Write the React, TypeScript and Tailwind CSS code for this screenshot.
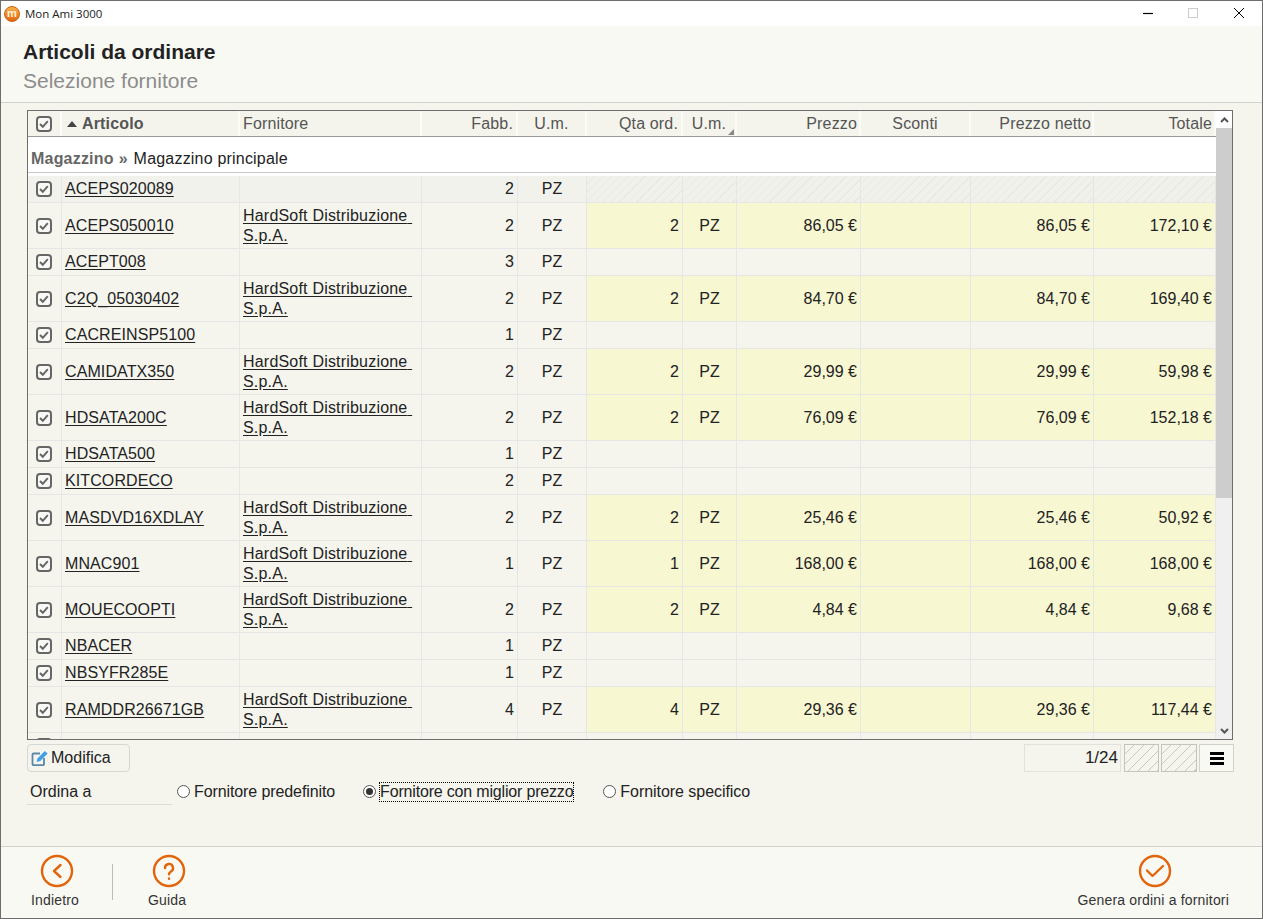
const gridCols = "grid grid-cols-[34px_178px_182px_96px_69px_96px_54px_124px_110px_123px_122px]";

type Row = {
  code: string;
  need: number;
  qty?: number;
  price?: string;
  total?: string;
  hatched?: boolean;
};

const rows: Row[] = [
  { code: "ACEPS020089", need: 2, hatched: true },
  { code: "ACEPS050010", need: 2, qty: 2, price: "86,05 €", total: "172,10 €" },
  { code: "ACEPT008", need: 3 },
  { code: "C2Q_05030402", need: 2, qty: 2, price: "84,70 €", total: "169,40 €" },
  { code: "CACREINSP5100", need: 1 },
  { code: "CAMIDATX350", need: 2, qty: 2, price: "29,99 €", total: "59,98 €" },
  { code: "HDSATA200C", need: 2, qty: 2, price: "76,09 €", total: "152,18 €" },
  { code: "HDSATA500", need: 1 },
  { code: "KITCORDECO", need: 2 },
  { code: "MASDVD16XDLAY", need: 2, qty: 2, price: "25,46 €", total: "50,92 €" },
  { code: "MNAC901", need: 1, qty: 1, price: "168,00 €", total: "168,00 €" },
  { code: "MOUECOOPTI", need: 2, qty: 2, price: "4,84 €", total: "9,68 €" },
  { code: "NBACER", need: 1 },
  { code: "NBSYFR285E", need: 1 },
  { code: "RAMDDR26671GB", need: 4, qty: 4, price: "29,36 €", total: "117,44 €" },
];

const hatch = "bg-[repeating-linear-gradient(135deg,#f1f1ec_0px,#f1f1ec_5px,#e9e9e4_5px,#e9e9e4_6px)]";

function Check() {
  return (
    <svg width="16" height="16" viewBox="0 0 16 16" fill="none">
      <rect x="1" y="1" width="14" height="14" rx="3" stroke="#666666" strokeWidth="2" fill="#f8f8f4" />
      <path d="M4 8l2.8 2.8 5-5.6" stroke="#666666" strokeWidth="2" />
    </svg>
  );
}

function HeadCell({ children, className = "" }: { children?: React.ReactNode; className?: string }) {
  return (
    <div className={`flex items-center border-r-2 border-[#fbfbf8] pt-[1px] tracking-[0.15px] text-[#555555] ${className}`}>{children}</div>
  );
}

function Cell({ children, className = "" }: { children?: React.ReactNode; className?: string }) {
  return (
    <div className={`flex items-center border-r border-[#e6e6e6] ${className}`}>{children}</div>
  );
}

function TableRow({ row }: { row: Row }) {
  const filled = row.qty !== undefined;
  const tail = row.hatched ? hatch : filled ? "bg-[#f7f7d2]" : "";
  return (
    <div className={`${gridCols} border-b border-[#e6e6e6] text-[#222222] ${filled ? "h-[46px]" : "h-[27px]"} ${row.hatched ? "bg-[#f2f2ed]" : ""}`}>
      <Cell className="justify-center pr-[1px]"><Check /></Cell>
      <Cell className="pl-[3px]"><span className="underline underline-offset-2 tracking-[0.1px]">{row.code}</span></Cell>
      <Cell className="pl-[3px]">
        {filled && (
          <div className="leading-[20px] tracking-[0.2px] underline underline-offset-2 whitespace-pre">
            HardSoft Distribuzione{" "}
            <br />
            S.p.A.
          </div>
        )}
      </Cell>
      <Cell className="justify-end pr-[3px]">{row.need}</Cell>
      <Cell className="justify-center">PZ</Cell>
      <Cell className={`justify-end pr-[3px] ${tail}`}>{row.qty}</Cell>
      <Cell className={`justify-center ${tail}`}>{filled ? "PZ" : ""}</Cell>
      <Cell className={`justify-end pr-[3px] ${tail}`}>{row.price}</Cell>
      <Cell className={tail} />
      <Cell className={`justify-end pr-[3px] ${tail}`}>{row.price}</Cell>
      <Cell className={`justify-end pr-[3px] ${tail}`}>{row.total}</Cell>
    </div>
  );
}

function Radio({ checked }: { checked?: boolean }) {
  return (
    <span className="flex h-[13px] w-[13px] items-center justify-center rounded-full border border-[#555555] bg-white">
      {checked && <span className="h-[7px] w-[7px] rounded-full bg-[#333333]" />}
    </span>
  );
}

function FooterButton({ label, children }: { label: string; children: React.ReactNode }) {
  return (
    <div className="flex flex-col items-center text-[14px] leading-[16px] tracking-[0.18px] text-[#333333]">
      <svg width="34" height="34" viewBox="0 0 34 34" fill="none" stroke="#e2650c" strokeWidth="2.4" strokeLinecap="round" strokeLinejoin="round" className="ml-[4px]">
        <circle cx="17" cy="17" r="15" />
        {children}
      </svg>
      <span className="mt-[4px]">{label}</span>
    </div>
  );
}

export default function App() {
  return (
    <div className="flex h-[919px] w-[1263px] flex-col overflow-hidden border border-[#6d6d6d] bg-[#f5f5ee] font-['Liberation_Sans',Arial,sans-serif] text-[16px] text-[#222222]">
      {/* title bar */}
      <div className="flex h-[25px] shrink-0 items-center bg-white pl-[3px]">
        <span className="flex h-[16px] w-[16px] items-center justify-center rounded-full border border-[#c9600f] bg-gradient-to-b from-[#f6b24a] to-[#e2650c] text-[11px] font-bold leading-none text-[#fff3d8]">
          m
        </span>
        <span className="ml-[5px] font-['Open_Sans',sans-serif] text-[11.5px] text-[#222222]">Mon Ami 3000</span>
        <div className="ml-auto flex items-center text-black">
          <svg width="46" height="25" viewBox="0 0 46 25"><path d="M19 12.5h10" stroke="#000" strokeWidth="1.2" /></svg>
          <svg width="46" height="25" viewBox="0 0 46 25"><rect x="18.5" y="7.5" width="9" height="9" fill="none" stroke="#cccccc" /></svg>
          <svg width="46" height="25" viewBox="0 0 46 25"><path d="M18 7l10 10M28 7L18 17" stroke="#000" strokeWidth="1" /></svg>
        </div>
      </div>

      {/* header */}
      <div className="flex h-[77px] shrink-0 flex-col border-b border-[#d2d2cd] bg-[#f9f9f4] pl-[22px] pt-[14px]">
        <div className="text-[21px] font-bold leading-[24px] text-[#222222]">Articoli da ordinare</div>
        <div className="mt-[5px] text-[21px] leading-[24px] text-[#8c8c8c]">Selezione fornitore</div>
      </div>

      {/* body */}
      <div className="flex-1 pl-[26px] pt-[7px]">
        <div className="flex h-[630px] w-[1206px] overflow-hidden border border-[#6d6d6d] bg-white">
          <div className="w-[1188px] shrink-0">
            <div className={`${gridCols} h-[26px] border-b border-[#999999] bg-[#f4f4ec]`}>
              <HeadCell className="justify-center"><Check /></HeadCell>
              <HeadCell className="pl-[5px] font-bold">
                <svg width="10" height="6" viewBox="0 0 10 6" className="mr-[5px]"><path d="M5 0l5 6H0z" fill="#444444" /></svg>
                Articolo
              </HeadCell>
              <HeadCell className="pl-[3px]">Fornitore</HeadCell>
              <HeadCell className="justify-end pr-[3px]">Fabb.</HeadCell>
              <HeadCell className="justify-center">U.m.</HeadCell>
              <HeadCell className="justify-end pr-[3px]">Qta ord.</HeadCell>
              <HeadCell className="relative justify-center">
                U.m.
                <svg width="6" height="6" viewBox="0 0 6 6" className="absolute bottom-[1px] right-[1px]"><path d="M6 0v6H0z" fill="#888888" /></svg>
              </HeadCell>
              <HeadCell className="justify-end pr-[2px]">Prezzo</HeadCell>
              <HeadCell className="justify-center">Sconti</HeadCell>
              <HeadCell className="justify-end pr-[1px]">Prezzo netto</HeadCell>
              <HeadCell className="justify-end border-r-0 pr-[2px]">Totale</HeadCell>
            </div>

            <div className="h-[39px] bg-white pb-[3px]">
              <div className="flex h-[36px] items-center border-b border-[#c8c8c8] pl-[3px] pt-[9px]">
                <span className="font-bold tracking-[0.2px] text-[#666666]">Magazzino</span>
                <span className="ml-[5px] font-bold text-[#666666]">»</span>
                <span className="ml-[6px] tracking-[0.2px] text-[#222222]">Magazzino principale</span>
              </div>
            </div>

            <div className="bg-[#f5f5ee]">
              {rows.map((r) => (
                <TableRow key={r.code} row={r} />
              ))}
              <div className={`${gridCols} h-[27px]`}>
                <Cell className="items-start justify-center pr-[1px] pt-[5px]"><Check /></Cell>
                <Cell /><Cell /><Cell /><Cell /><Cell /><Cell /><Cell /><Cell /><Cell /><Cell />
              </div>
            </div>
          </div>

          {/* scrollbar */}
          <div className="flex w-[16px] shrink-0 flex-col bg-[#f0f0f0]">
            <div className="flex h-[17px] items-center justify-center bg-white">
              <svg width="9" height="6" viewBox="0 0 9 6" fill="none"><path d="M1 5l3.5-3.5L8 5" stroke="#555555" strokeWidth="2" /></svg>
            </div>
            <div className="h-[370px] bg-[#cdcdcd]" />
            <div className="flex-1" />
            <div className="flex h-[17px] items-center justify-center">
              <svg width="9" height="6" viewBox="0 0 9 6" fill="none"><path d="M1 1l3.5 3.5L8 1" stroke="#555555" strokeWidth="2" /></svg>
            </div>
          </div>
        </div>

        {/* table actions */}
        <div className="mt-[4px] flex h-[28px] w-[1207px] items-stretch">
          <div className="flex w-[103px] items-center rounded-[4px] border border-[#d8d8d2] pl-[3px]">
            <svg width="17" height="17" viewBox="0 0 17 17" fill="none">
              <path d="M9 3.5H2.5a1 1 0 0 0-1 1v9.700a1 1 0 0 0 1 1h9.500a1 1 0 0 0 1-1V8" stroke="#5b87a8" strokeWidth="1.8" />
              <path d="M5.500 12l1-3.500L13.800 1l2.800 2.600-7.300 7.400z" fill="#3fa0e6" />
            </svg>
            <span className="ml-[3px]">Modifica</span>
          </div>
          <div className="ml-auto flex w-[97px] items-center justify-end border border-[#e2e2dc] pr-[2px] text-[17px]">1/24</div>
          <div className="ml-[3px] w-[35px] border border-[#c4c4be] bg-[repeating-linear-gradient(135deg,#f5f5ee_0px,#f5f5ee_6px,#c8c8c2_6px,#c8c8c2_7px)]" />
          <div className="ml-[2px] w-[36px] border border-[#c4c4be] bg-[repeating-linear-gradient(135deg,#f5f5ee_0px,#f5f5ee_6px,#c8c8c2_6px,#c8c8c2_7px)]" />
          <div className="ml-[2px] flex w-[35px] flex-col items-center justify-center gap-[2px] border border-[#d2d2cc] bg-[#f9f9f4]">
            <span className="h-[3px] w-[14px] bg-black" />
            <span className="h-[3px] w-[14px] bg-black" />
            <span className="h-[3px] w-[14px] bg-black" />
          </div>
        </div>

        {/* order target */}
        <div className="mt-[9px] flex items-start">
          <div className="h-[24px] w-[145px] border-b border-[#dcdcd6] pl-[3px] leading-[21px]">Ordina a</div>
          <div className="ml-[5px] flex h-[21px] items-center">
            <Radio />
            <span className="ml-[4px] tracking-[-0.1px]">Fornitore predefinito</span>
            <span className="ml-[28px]"><Radio checked /></span>
            <span className="ml-[3px] border border-dotted border-black leading-[18px] tracking-[-0.18px]">Fornitore con miglior prezzo</span>
            <span className="ml-[29px]"><Radio /></span>
            <span className="ml-[4px] tracking-[-0.05px]">Fornitore specifico</span>
          </div>
        </div>
      </div>

      {/* footer */}
      <div className="flex h-[72px] shrink-0 items-start border-t border-[#d2d2cd] bg-[#f9f9f4] pt-[7px]">
        <div className="ml-[29px] w-[50px]">
          <FooterButton label="Indietro"><path d="M20.500 11L14 17l6.500 6" /></FooterButton>
        </div>
        <div className="ml-[32px] mt-[10px] h-[36px] w-px bg-[#bdbdb8]" />
        <div className="ml-[35px]">
          <FooterButton label="Guida">
            <path d="M13 14a4 4 0 1 1 6 3.400c-1.300.8-2 1.400-2 2.800" />
            <path d="M17 24.500v.2" />
          </FooterButton>
        </div>
        <div className="ml-auto mr-[33px]">
          <FooterButton label="Genera ordini a fornitori"><path d="M9 16.500l5.500 5.500L25 12" /></FooterButton>
        </div>
      </div>
    </div>
  );
}
